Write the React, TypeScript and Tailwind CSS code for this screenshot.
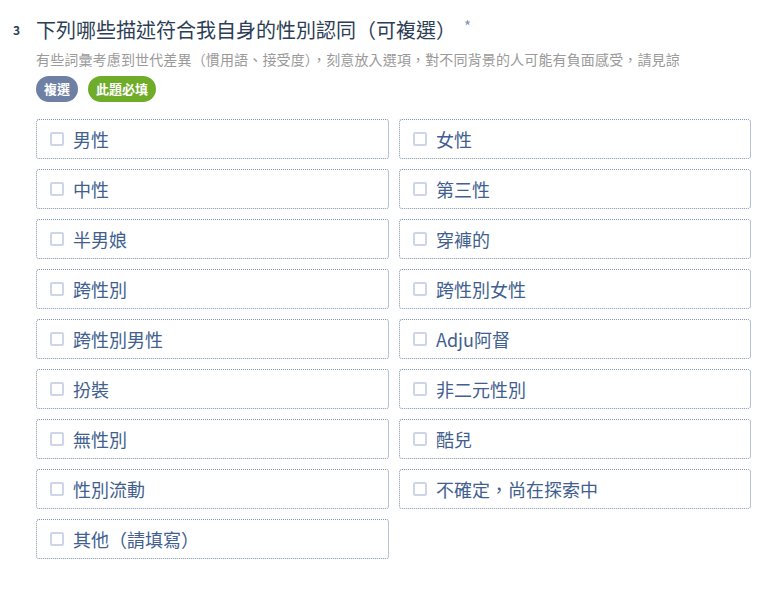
import React from "react";

const options = [
  "男性",
  "女性",
  "中性",
  "第三性",
  "半男娘",
  "穿褲的",
  "跨性別",
  "跨性別女性",
  "跨性別男性",
  "Adju阿督",
  "扮裝",
  "非二元性別",
  "無性別",
  "酷兒",
  "性別流動",
  "不確定，尚在探索中",
  "其他（請填寫）",
];

export default function App() {
  return (
    <div
      className="w-[771px] h-[590px] bg-white pt-[17px]"
      style={{ fontFamily: '"Noto Sans CJK TC", "Noto Sans", sans-serif' }}
    >
      <div className="flex">
        <div className="w-[36px] pl-[13px] pt-[3px] text-[12px] font-bold text-[#2c3e55] leading-[20px]">3</div>
        <div className="flex-1">
          <div className="flex items-start">
            <h1 className="text-[20px] leading-[26px] text-[#2c3e55]">下列哪些描述符合我自身的性別認同（可複選）</h1>
            <span className="ml-[8px] -mt-[2px] text-[15px] text-[#7f93b3]">*</span>
          </div>
          <p className="mt-[6px] text-[14px] leading-[20px] text-[#9a9a9a] tracking-[0.15px]">
            有些詞彙考慮到世代差異（慣用語、接受度），刻意放入選項，對不同背景的人可能有負面感受，請見諒
          </p>
          <div className="mt-[7px] flex gap-[10px]">
            <span className="h-[26px] px-[8px] rounded-full bg-[#6e80a3] text-white text-[13px] font-bold flex items-center">複選</span>
            <span className="h-[26px] px-[8px] rounded-full bg-[#6fac2a] text-white text-[13px] font-bold flex items-center">此題必填</span>
          </div>
          <div className="mt-[17px] grid grid-cols-[353px_352px] gap-x-[10px] gap-y-[10px]">
            {options.map((o) => (
              <div
                key={o}
                className="h-[40px] flex items-center pl-[13px] rounded-[3px] border border-dotted border-[#8295b1] [border-right-style:solid] [border-right-color:#b6c3d8]"
              >
                <span className="w-[14px] h-[14px] border-2 border-[#cdd6e8] rounded-[2px] shrink-0" />
                <span className="ml-[9px] text-[18px] text-[#41608f]">{o}</span>
              </div>
            ))}
          </div>
        </div>
      </div>
    </div>
  );
}
